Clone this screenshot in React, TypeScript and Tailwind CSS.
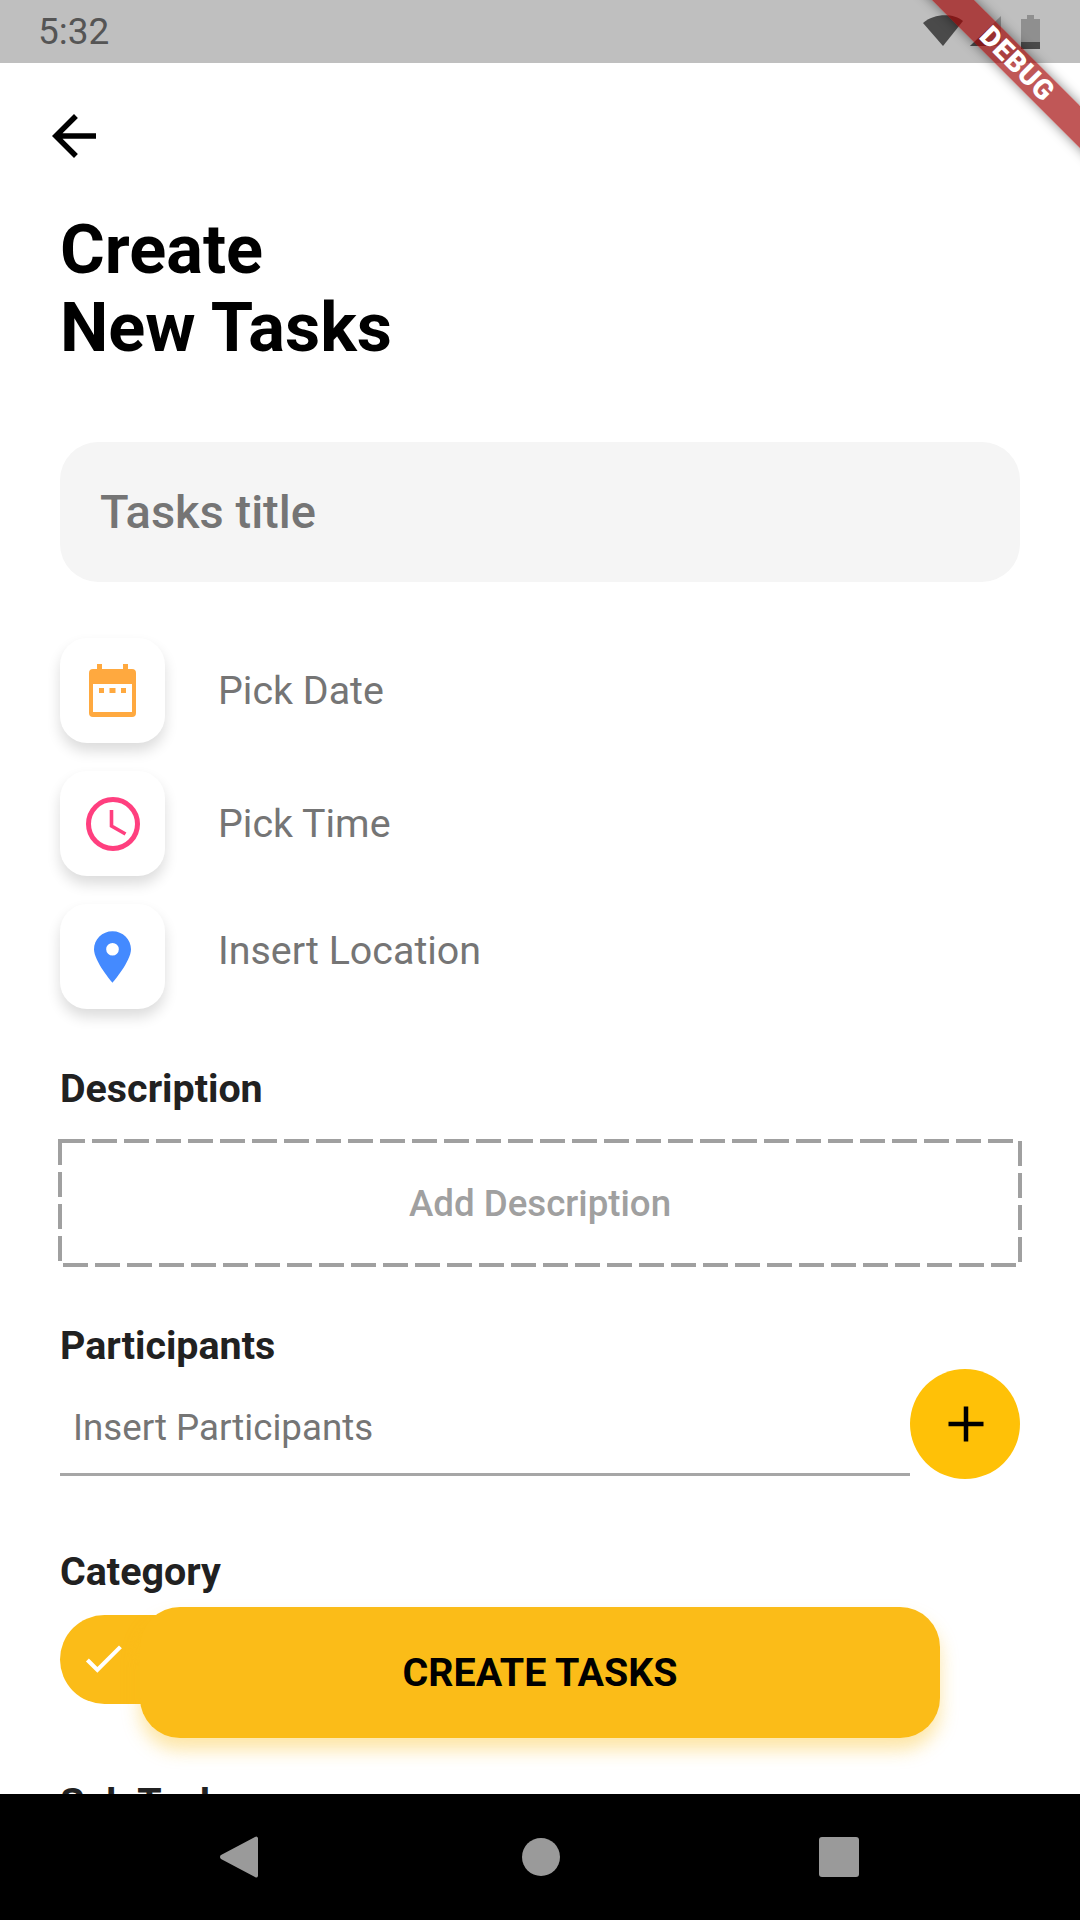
// Create New Tasks screen

function BackIcon() {
  return (
    <svg width="66" height="66" viewBox="0 0 24 24" fill="#000000" className="mt-[40px] -ml-[19px]">
      <path d="M20 11H7.83l5.59-5.59L12 4l-8 8 8 8 1.41-1.41L7.83 13H20v-2z" />
    </svg>
  );
}

function CalendarIcon() {
  return (
    <svg width="47" height="53" viewBox="0 0 47 53" fill="#ffa93f">
      <path
        fillRule="evenodd"
        d="M8 0h5v5h21V0h5v5h4a4 4 0 0 1 4 4v40a4 4 0 0 1-4 4H4a4 4 0 0 1-4-4V9a4 4 0 0 1 4-4h4V0zM4 20v28h39V20H4z"
      />
      <rect x="10" y="24" width="5" height="5" />
      <rect x="20.5" y="24" width="6" height="5" />
      <rect x="32" y="24" width="5" height="5" />
    </svg>
  );
}

function ClockIcon() {
  return (
    <svg width="54" height="54" viewBox="0 0 54 54" fill="none" stroke="#ff3f7f">
      <circle cx="27" cy="27" r="24.5" strokeWidth="5" />
      <path d="M25.5 13v16l14 8" strokeWidth="3.6" />
    </svg>
  );
}

function PinIcon() {
  return (
    <svg width="37" height="52" viewBox="0 0 38 53">
      <path
        fill="#448aff"
        fillRule="evenodd"
        d="M19 0C8.5 0 0 8.3 0 18.6 0 31 19 53 19 53s19-22 19-34.4C38 8.3 29.5 0 19 0zm0 12a6.5 6.5 0 1 1 0 13 6.5 6.5 0 0 1 0-13z"
      />
    </svg>
  );
}

function PickerRow({ icon, label, textClass }: { icon: React.ReactNode; label: string; textClass?: string }) {
  return (
    <div className="flex items-center">
      <div className="flex h-[105px] w-[105px] items-center justify-center rounded-[27px] bg-white shadow-[0_8px_14px_rgba(0,0,0,0.14)]">
        {icon}
      </div>
      <span className={`ml-[53px] text-[39.4px] leading-[46px] text-[#757575] ${textClass ?? ''}`}>{label}</span>
    </div>
  );
}

function SectionLabel({ children, className }: { children: React.ReactNode; className?: string }) {
  return <h2 className={`text-[39.4px] leading-[46px] font-bold text-[#212121] ${className ?? ''}`}>{children}</h2>;
}

export default function App() {
  return (
    <div
      className="relative flex h-[1920px] w-[1080px] flex-col overflow-hidden bg-white"
      style={{ fontFamily: 'Roboto, sans-serif' }}
    >
      {/* Status bar */}
      <div className="flex h-[63px] shrink-0 items-center justify-between bg-[#bfbfbf] pr-[39px] pl-[38px]">
        <span className="text-[37px] leading-none text-[#555555]">5:32</span>
        <div className="flex items-center">
          <svg width="118" height="36" viewBox="0 0 118 36">
            <path d="M0 9C11 -1 31 -1 40 7L20 32Z" fill="#4a4a4a" />
            <path d="M47 32 78 2V32Z" fill="#8d8d8d" />
            <path d="M47 32 63 17V32Z" fill="#4a4a4a" />
            <path d="M98 5h6V1h7v4h6v30H98Z" fill="#8f8f8f" />
            <path d="M98 28h19v7H98Z" fill="#4a4a4a" />
          </svg>
        </div>
      </div>

      {/* Scrolling form */}
      <div className="min-h-0 flex-1 overflow-hidden px-[60px]">
        <BackIcon />
        <h1 className="mt-[42px] text-[68.5px] leading-[78px] font-bold text-black">
          Create
          <br />
          New Tasks
        </h1>

        <div className="mt-[75px] flex h-[140px] items-center rounded-[38px] bg-[#f5f5f5] px-[40px]">
          <span className="text-[47px] font-medium text-[#757575]">Tasks title</span>
        </div>

        <div className="mt-[56px] flex flex-col gap-[28px]">
          <PickerRow icon={<CalendarIcon />} label="Pick Date" />
          <PickerRow icon={<ClockIcon />} label="Pick Time" />
          <PickerRow icon={<PinIcon />} label="Insert Location" textClass="-mt-[12px]" />
        </div>

        <SectionLabel className="mt-[57px]">Description</SectionLabel>
        <div className="relative mt-[27px] -mx-[2px] flex h-[128px] items-center justify-center pt-[2px]">
          <svg width="964" height="128" viewBox="0 0 964 128" fill="none" className="absolute inset-0">
            <rect x="2" y="2" width="960" height="124" stroke="#a0a0a0" strokeWidth="4" strokeDasharray="25 7" />
          </svg>
          <span className="text-[36.7px] font-medium text-[#a0a0a0]">Add Description</span>
        </div>

        <SectionLabel className="mt-[56px]">Participants</SectionLabel>
        <div className="flex items-start">
          <div className="flex h-[107px] flex-1 items-center border-b-[3px] border-[#a6a6a6] pt-[14px] pl-[13px]">
            <span className="text-[36.7px] text-[#757575]">Insert Participants</span>
          </div>
          <div className="flex h-[110px] w-[110px] items-center justify-center rounded-full bg-[#ffc107]">
            <svg width="60" height="60" viewBox="0 0 24 24" fill="#000000" className="ml-[2px]">
              <path d="M19 12.9h-6.1V19h-1.8v-6.1H5v-1.8h6.1V5h1.8v6.1H19v1.8z" />
            </svg>
          </div>
        </div>

        <SectionLabel className="mt-[70px]">Category</SectionLabel>
        <div className="mt-[20px] flex h-[89px] w-[240px] items-center rounded-full bg-[#fbbc18] pl-[19px]">
          <svg width="49" height="49" viewBox="0 0 24 24" fill="#ffffff" className="-mt-[3px]">
            <path d="M9 16.17L4.83 12l-1.42 1.41L9 19 21 7l-1.41-1.41z" />
          </svg>
        </div>

        <SectionLabel className="mt-[76px]">Sub Tasks</SectionLabel>
      </div>

      {/* Navigation bar */}
      <div className="flex h-[126px] shrink-0 items-center justify-center bg-black">
        <svg width="640" height="44" viewBox="0 0 640 44" fill="#9a9a9a">
          <path d="M38 3v38a2 2 0 0 1-3 1L1 24a2.5 2.5 0 0 1 0-4L35 2a2 2 0 0 1 3 1z" />
          <circle cx="321" cy="22" r="19" />
          <rect x="599" y="2" width="40" height="40" rx="3" />
        </svg>
      </div>

      {/* Floating submit button */}
      <button className="absolute top-[1607px] left-[140px] flex h-[131px] w-[800px] items-center justify-center rounded-[40px] bg-[#fbbc18] text-[39.4px] font-bold text-black shadow-[0_12px_18px_rgba(251,188,24,0.38)]">
        CREATE TASKS
      </button>

      {/* Debug banner */}
      <div className="absolute top-[49px] left-[867px] flex h-[30px] w-[300px] rotate-45 items-center justify-center bg-[#a00000a8] text-[28px] font-black tracking-[0.5px] text-white shadow-[0_0_12px_rgba(0,0,0,0.45)]">
        DEBUG
      </div>
    </div>
  );
}
